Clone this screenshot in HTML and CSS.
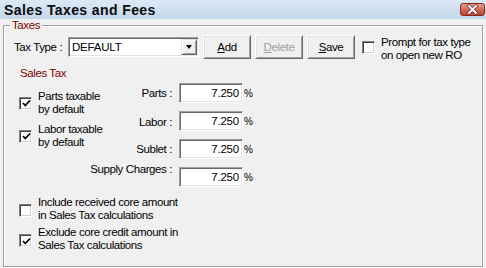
FILE: index.html
```html
<!DOCTYPE html>
<html>
<head>
<meta charset="utf-8">
<link rel="stylesheet" href="styles.css">
</head>
<body>
<div class="window">
  <div class="titlebar">
    <span class="title">Sales Taxes and Fees</span>
    <span class="close">
      <svg width="25" height="13" viewBox="0 0 25 13">
        <defs>
          <linearGradient id="cg" x1="0" y1="0" x2="0" y2="1">
            <stop offset="0" stop-color="#e8a898"/>
            <stop offset="0.5" stop-color="#d06a5a"/>
            <stop offset="1" stop-color="#b8402e"/>
          </linearGradient>
        </defs>
        <rect x="0.5" y="0.5" width="24" height="12" rx="2.5" fill="url(#cg)" stroke="#8a2a1e"/>
        <path d="M9 3 L16 10 M16 3 L9 10" stroke="#6a2a22" stroke-width="3.4" stroke-linecap="square"/>
        <path d="M9 3 L16 10 M16 3 L9 10" stroke="#ffffff" stroke-width="2" stroke-linecap="square"/>
      </svg>
    </span>
  </div>
  <fieldset class="group">
    <legend class="legend">Taxes</legend>
    <div class="toprow">
      <span class="rowlabel">Tax Type :</span>
      <div class="combo">
        <span class="combo-text">DEFAULT</span>
        <span class="combo-btn"><span class="arrow"></span></span>
      </div>
      <button class="btn"><u>A</u>dd</button>
      <button class="btn disabled"><u>D</u>elete</button>
      <button class="btn"><u>S</u>ave</button>
      <span class="cb prompt-cb"></span>
      <span class="prompt-text">Prompt for tax type<br>on open new RO</span>
    </div>
    <div class="section-title">Sales Tax</div>
    <div class="taxgrid">
      <div class="checks">
        <div class="check">
          <span class="cb checked"><svg width="9" height="9" viewBox="0 0 9 9"><path d="M1 4 L3.3 6.5 L8 1.5" fill="none" stroke="#000" stroke-width="1.8"/></svg></span>
          <span class="check-text">Parts taxable<br>by default</span>
        </div>
        <div class="check">
          <span class="cb checked"><svg width="9" height="9" viewBox="0 0 9 9"><path d="M1 4 L3.3 6.5 L8 1.5" fill="none" stroke="#000" stroke-width="1.8"/></svg></span>
          <span class="check-text">Labor taxable<br>by default</span>
        </div>
      </div>
      <span class="rate-label r1">Parts :</span>
      <span class="field r1">7.250</span>
      <span class="pct r1">%</span>
      <span class="rate-label r2 nudge-down">Labor :</span>
      <span class="field r2">7.250</span>
      <span class="pct r2">%</span>
      <span class="rate-label r3">Sublet :</span>
      <span class="field r3">7.250</span>
      <span class="pct r3">%</span>
      <span class="rate-label r4 wide up">Supply Charges :</span>
      <span class="field r4">7.250</span>
      <span class="pct r4">%</span>
    </div>
    <div class="bottom-checks">
      <div class="check">
        <span class="cb low"></span>
        <span class="check-text">Include received core amount<br>in Sales Tax calculations</span>
      </div>
      <div class="check">
        <span class="cb checked low"><svg width="9" height="9" viewBox="0 0 9 9"><path d="M1 4 L3.3 6.5 L8 1.5" fill="none" stroke="#000" stroke-width="1.8"/></svg></span>
        <span class="check-text">Exclude core credit amount in<br>Sales Tax calculations</span>
      </div>
    </div>
  </fieldset>
</div>
</body>
</html>
```
FILE: styles.css
```css
* { box-sizing: border-box; }
html, body {
  margin: 0;
  padding: 0;
  background: #f0f0f0;
}
body {
  width: 486px;
  height: 268px;
  overflow: hidden;
  font-family: "Liberation Sans", Arial, sans-serif;
  font-size: 11.5px;
  letter-spacing: -0.4px;
  color: #000;
}
.window {
  width: 486px;
  height: 268px;
}
.titlebar {
  height: 19px;
  display: flex;
  align-items: center;
  justify-content: space-between;
  padding: 0 1px 0 4px;
  background: linear-gradient(#dce8f5, #c4d7eb);
}
.title {
  font-weight: bold;
  font-size: 14px;
  letter-spacing: 0.4px;
  color: #0a0a0a;
  line-height: 16px;
}
.close {
  display: flex;
  align-self: flex-start;
  margin-top: 3px;
}
.group {
  margin: 0 3px;
  padding: 4px 10px 0 10px;
  border: 1px solid #a0a0a0;
  box-shadow: 1px 1px 0 #fff, inset 1px 1px 0 #fff;
  height: 248px;
  min-width: 0;
}
.legend {
  padding: 0 2px;
  margin-left: -4px;
  line-height: 12px;
  color: #800000;
  background: #f0f0f0;
}
.toprow {
  display: flex;
  align-items: center;
  height: 24px;
}
.rowlabel {
  width: 54px;
  white-space: nowrap;
}
.combo {
  width: 131px;
  height: 20px;
  display: flex;
  align-items: stretch;
  justify-content: space-between;
  background: #fff;
  border-top: 1px solid #a0a0a0;
  border-left: 1px solid #a0a0a0;
  border-right: 1px solid #fff;
  border-bottom: 1px solid #fff;
  box-shadow: inset 1px 1px 0 #696969, inset -1px -1px 0 #e3e3e3;
  padding: 1px;
}
.combo-text {
  padding-left: 2px;
  line-height: 16px;
  letter-spacing: -0.2px;
}
.combo-btn {
  width: 16px;
  display: flex;
  align-items: center;
  justify-content: center;
  background: #f0f0f0;
  border-top: 1px solid #e3e3e3;
  border-left: 1px solid #e3e3e3;
  border-right: 1px solid #696969;
  border-bottom: 1px solid #696969;
  box-shadow: inset 1px 1px 0 #fff, inset -1px -1px 0 #a0a0a0;
}
.arrow {
  width: 0;
  height: 0;
  border-left: 3.5px solid transparent;
  border-right: 3.5px solid transparent;
  border-top: 4px solid #000;
}
.btn {
  width: 48px;
  height: 24px;
  margin-left: 4px;
  padding: 0;
  font: inherit;
  letter-spacing: inherit;
  color: #000;
  background: #f0f0f0;
  border-top: 1px solid #fff;
  border-left: 1px solid #fff;
  border-right: 1px solid #696969;
  border-bottom: 1px solid #696969;
  box-shadow: inset 1px 1px 0 #e3e3e3, inset -1px -1px 0 #a0a0a0;
}
.btn.disabled {
  color: #a0a0a0;
}
.cb {
  flex: none;
  width: 13px;
  height: 13px;
  display: flex;
  align-items: center;
  justify-content: center;
  background: #fff;
  border-top: 1px solid #808080;
  border-left: 1px solid #808080;
  border-right: 1px solid #fff;
  border-bottom: 1px solid #fff;
  box-shadow: inset 1px 1px 0 #404040, inset -1px -1px 0 #d4d0c8;
}
.cb svg {
  display: block;
  margin: 1px 0 0 1px;
}
.prompt-cb {
  margin-left: 7px;
}
.prompt-text {
  margin-left: 6px;
  line-height: 13px;
  margin-top: 3px;
  white-space: nowrap;
}
.section-title {
  margin: 8px 0 0 6px;
  line-height: 12px;
  color: #800000;
}
.taxgrid {
  margin: 4px 0 0 5px;
  display: grid;
  grid-template-columns: 91px 69px 64px auto;
  grid-template-rows: repeat(4, 20px);
  row-gap: 8px;
}
.checks {
  grid-column: 1;
  grid-row: 1 / 4;
  display: flex;
  flex-direction: column;
  gap: 7px;
  padding-top: 7px;
}
.check {
  display: flex;
  align-items: center;
}
.check-text {
  margin-left: 6px;
  line-height: 13px;
  white-space: nowrap;
}
.rate-label {
  grid-column: 2;
  justify-self: end;
  align-self: center;
  padding-right: 7px;
  white-space: nowrap;
  line-height: 13px;
}
.rate-label.wide {
  grid-column: 1 / 3;
}
.rate-label.up {
  align-self: start;
  margin-top: -4px;
}
.rate-label.nudge-down {
  margin-top: 2px;
}
.r1 { grid-row: 1; }
.r2 { grid-row: 2; }
.r3 { grid-row: 3; }
.r4 { grid-row: 4; }
.field {
  grid-column: 3;
  height: 20px;
  background: #fff;
  border-top: 1px solid #a0a0a0;
  border-left: 1px solid #a0a0a0;
  border-right: 1px solid #fff;
  border-bottom: 1px solid #fff;
  box-shadow: inset 1px 1px 0 #696969, inset -1px -1px 0 #e3e3e3;
  text-align: right;
  padding-right: 3px;
  line-height: 18px;
  letter-spacing: -0.2px;
}
.pct {
  grid-column: 4;
  align-self: center;
  margin-left: 1px;
  font-size: 10px;
  letter-spacing: 0;
}
.bottom-checks {
  margin: 9px 0 0 5px;
  display: flex;
  flex-direction: column;
  gap: 4px;
}
.cb.low {
  margin-top: 3px;
}
```
